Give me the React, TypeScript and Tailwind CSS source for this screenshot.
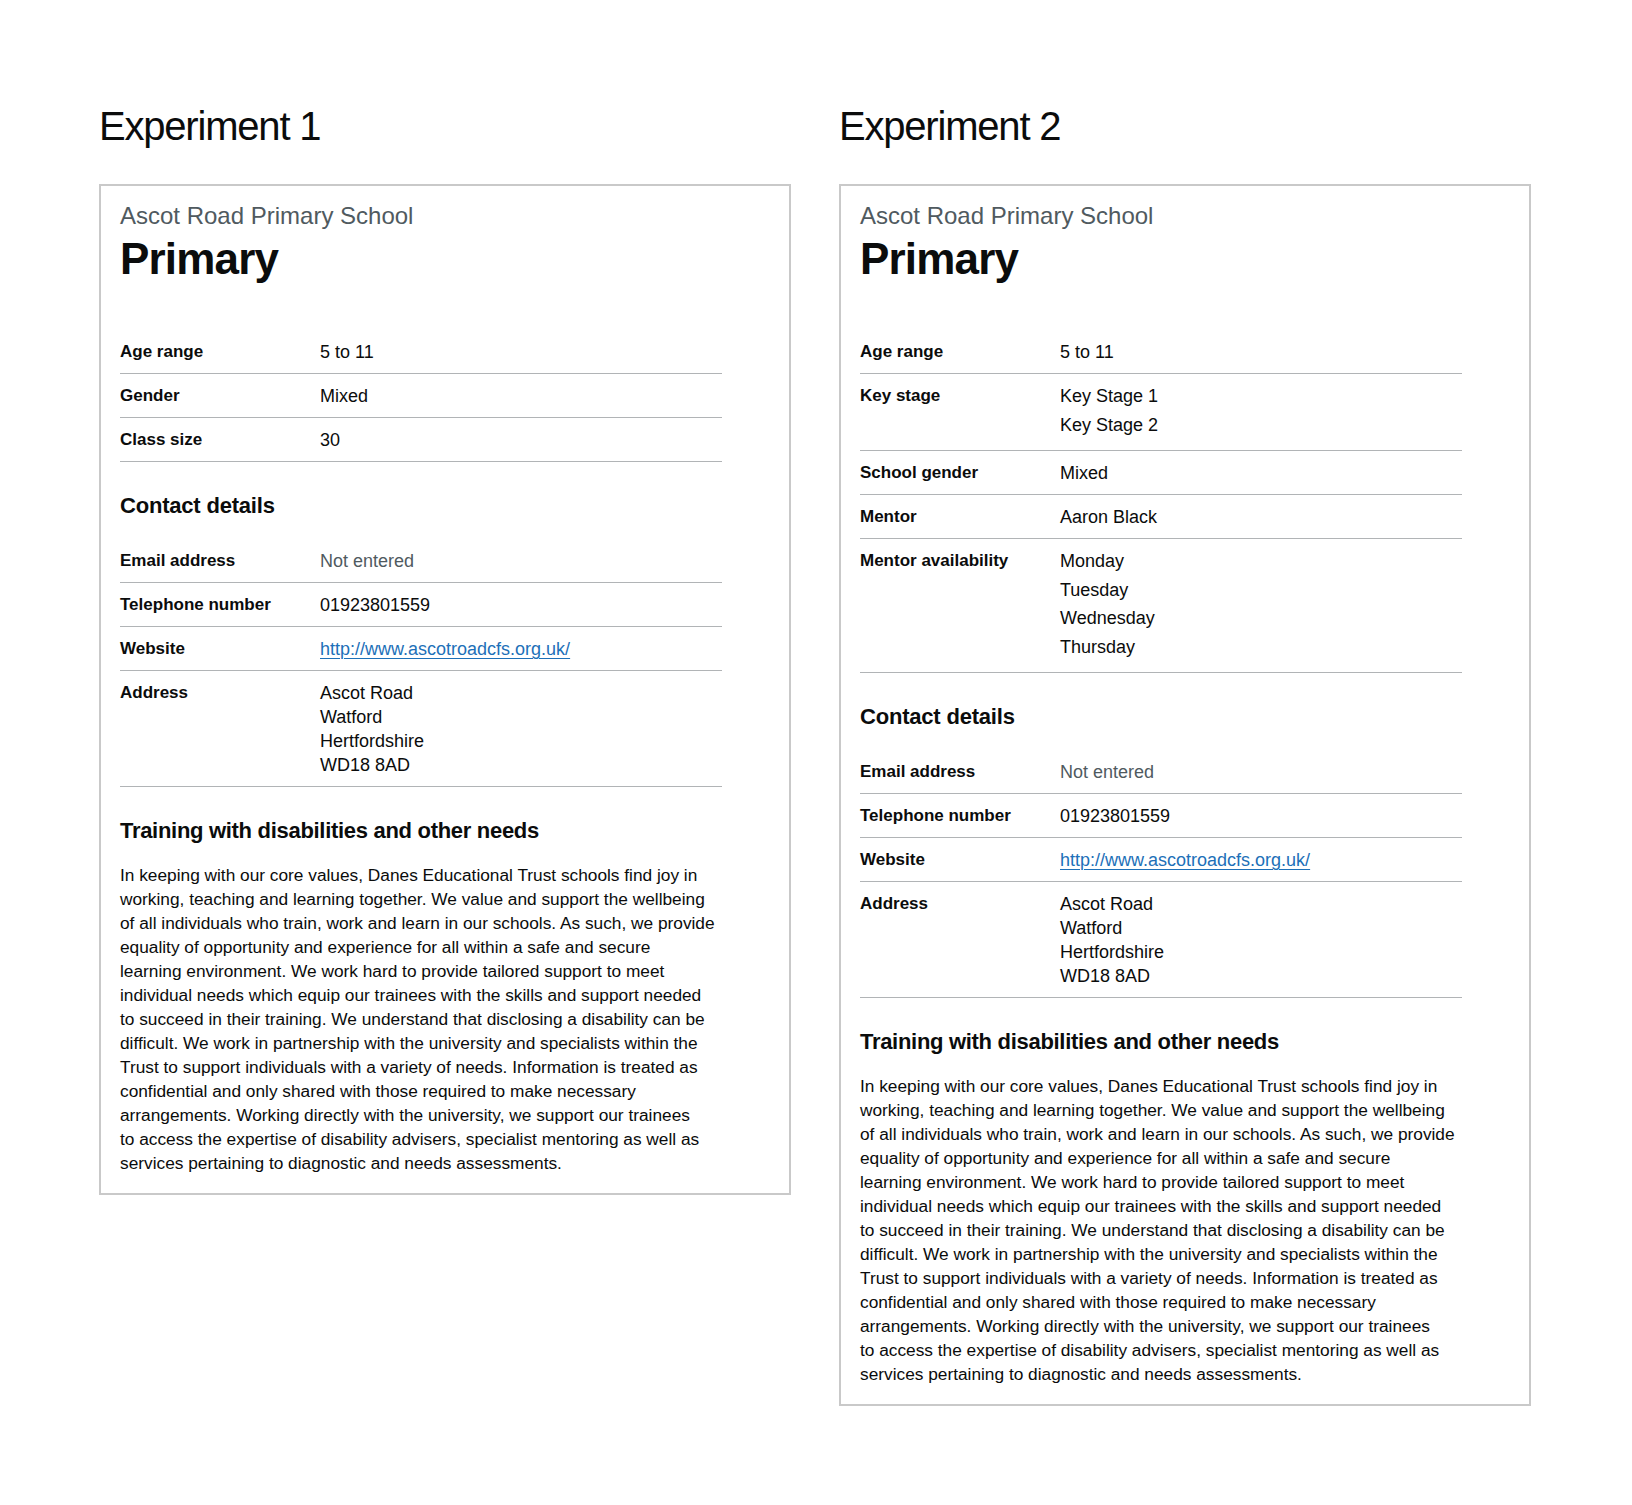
const bodyLines = [
  'In keeping with our core values, Danes Educational Trust schools find joy in',
  'working, teaching and learning together. We value and support the wellbeing',
  'of all individuals who train, work and learn in our schools. As such, we provide',
  'equality of opportunity and experience for all within a safe and secure',
  'learning environment. We work hard to provide tailored support to meet',
  'individual needs which equip our trainees with the skills and support needed',
  'to succeed in their training. We understand that disclosing a disability can be',
  'difficult. We work in partnership with the university and specialists within the',
  'Trust to support individuals with a variety of needs. Information is treated as',
  'confidential and only shared with those required to make necessary',
  'arrangements. Working directly with the university, we support our trainees',
  'to access the expertise of disability advisers, specialist mentoring as well as',
  'services pertaining to diagnostic and needs assessments.',
]

type Row = { label: string; value?: string; items?: string[]; lines?: string[]; muted?: boolean; link?: boolean }

const contactRows: Row[] = [
  { label: 'Email address', value: 'Not entered', muted: true },
  { label: 'Telephone number', value: '01923801559' },
  { label: 'Website', value: 'http://www.ascotroadcfs.org.uk/', link: true },
  { label: 'Address', lines: ['Ascot Road', 'Watford', 'Hertfordshire', 'WD18 8AD'] },
]

const experiment1Rows: Row[] = [
  { label: 'Age range', value: '5 to 11' },
  { label: 'Gender', value: 'Mixed' },
  { label: 'Class size', value: '30' },
]

const experiment2Rows: Row[] = [
  { label: 'Age range', value: '5 to 11' },
  { label: 'Key stage', items: ['Key Stage 1', 'Key Stage 2'] },
  { label: 'School gender', value: 'Mixed' },
  { label: 'Mentor', value: 'Aaron Black' },
  { label: 'Mentor availability', items: ['Monday', 'Tuesday', 'Wednesday', 'Thursday'] },
]

function SummaryList({ rows }: { rows: Row[] }) {
  return (
    <dl className="w-[602px]">
      {rows.map((row) => (
        <div key={row.label} className="flex border-b border-[#b1b4b6] pt-[10px] pb-[9px]">
          <dt className="w-[200px] shrink-0 text-[17px] leading-[24px] font-bold">{row.label}</dt>
          <dd className="text-[18px] leading-[24px]">
            {row.items ? (
              <ul>
                {row.items.map((item) => (
                  <li key={item} className="mb-[4.5px]">
                    {item}
                  </li>
                ))}
              </ul>
            ) : row.lines ? (
              row.lines.map((line) => <div key={line}>{line}</div>)
            ) : row.link ? (
              <a href="#" className="text-[#1d70b8] underline underline-offset-[3px] decoration-1">
                {row.value}
              </a>
            ) : (
              <span className={row.muted ? 'text-[#505a5f]' : ''}>{row.value}</span>
            )}
          </dd>
        </div>
      ))}
    </dl>
  )
}

function SchoolCard({ rows }: { rows: Row[] }) {
  return (
    <div className="border-2 border-[#c9c9c9] px-[19px] pt-[15px] pb-[18px]">
      <span className="block text-[24px] leading-[30px] text-[#505a5f]">Ascot Road Primary School</span>
      <h1 className="mt-[3px] mb-[46px] text-[44px] leading-[50px] font-bold tracking-[-0.8px]">Primary</h1>

      <SummaryList rows={rows} />

      <h2 className="mt-[30px] mb-[19px] text-[22px] leading-[28px] font-bold tracking-[-0.2px]">Contact details</h2>
      <SummaryList rows={contactRows} />

      <h2 className="mt-[30px] mb-[18px] text-[22px] leading-[28px] font-bold tracking-[-0.3px]">
        Training with disabilities and other needs
      </h2>
      <p className="text-[17.3px] leading-[24px] whitespace-nowrap">
        {bodyLines.map((line, i) => (
          <span key={i}>
            {line}
            {i < bodyLines.length - 1 && <br />}
          </span>
        ))}
      </p>
    </div>
  )
}

export default function App() {
  return (
    <main className="min-h-screen bg-white px-[99px] pt-[102px] pb-[100px] font-['Liberation_Sans',Arial,sans-serif] text-[#0b0c0c]">
      <div className="flex items-start gap-[48px]">
        <section className="w-[692px]">
          <h2 className="mb-[34px] text-[40px] leading-[48px] tracking-[-1.2px]">Experiment 1</h2>
          <SchoolCard rows={experiment1Rows} />
        </section>
        <section className="w-[692px]">
          <h2 className="mb-[34px] text-[40px] leading-[48px] tracking-[-1.2px]">Experiment 2</h2>
          <SchoolCard rows={experiment2Rows} />
        </section>
      </div>
    </main>
  )
}
